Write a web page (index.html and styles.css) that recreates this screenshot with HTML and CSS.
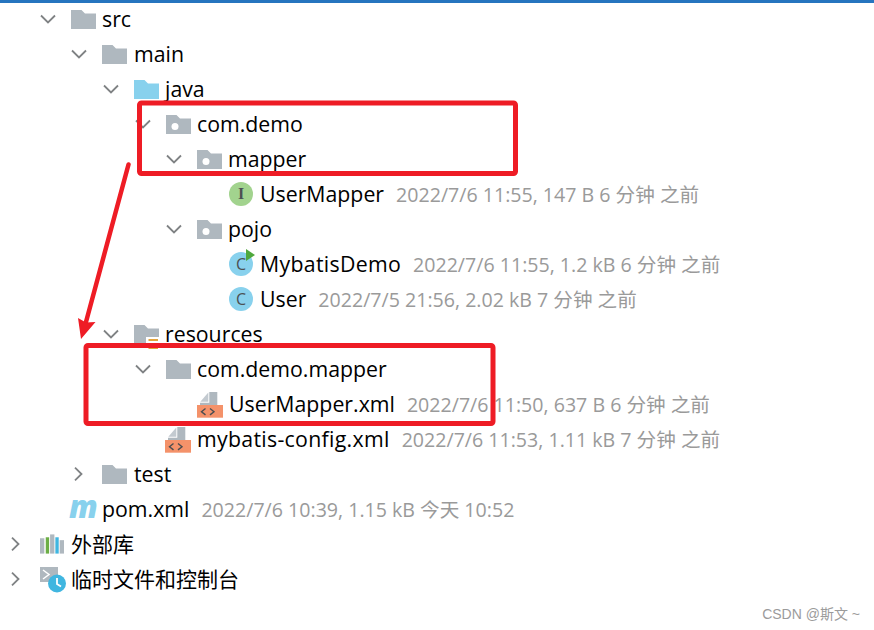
FILE: index.html
```html
<!DOCTYPE html>
<html lang="zh-CN">
	<head>
		<meta charset="UTF-8">
		<title>Project tree</title>
		<link rel="stylesheet" href="styles.css">
	</head>
	<body>
		<svg class="defs" width="0" height="0">
			<symbol id="folder" viewBox="0 0 25 19"><path d="M0 0h10.500l3.500 3.500h11V19H0z"/></symbol>
			<symbol id="pkg" viewBox="0 0 25 19"><path d="M0 0h10.500l3.500 3.500h11V19H0z"/><circle cx="9" cy="11.500" r="3.500" fill="#fff"/></symbol>
			<symbol id="chev-down" viewBox="0 0 16 10"><path d="M1 1.500l7 7 7-7" fill="none" stroke="#7f8284" stroke-width="1.800"/></symbol>
			<symbol id="chev-right" viewBox="0 0 9 14"><path d="M1 .7l6.500 6.300L1 13.300" fill="none" stroke="#7f8284" stroke-width="1.800"/></symbol>
			<symbol id="xml" viewBox="0 0 26 26">
				<path d="M12.300 0h8v14H3v-3.300h9.300z" fill="#afb8bf"/>
				<path d="M3.300 9.700L11.300 .5v9.200z" fill="#c3cad0"/>
				<path d="M0 13h26v12.700H0z" fill="#f4926a"/>
				<path d="M8.500 16.500l-4 3.200 4 3.200M13 16.500l4 3.200-4 3.200" fill="none" stroke="#4a4d50" stroke-width="1.400"/>
			</symbol>
		</svg>

		<div class="topbar"></div>
		<ul class="tree">
			<li class="row lv1"><svg class="chev"><use href="#chev-down"/></svg><svg class="icon folder"><use href="#folder"/></svg><span class="name">src</span></li>
			<li class="row lv2"><svg class="chev"><use href="#chev-down"/></svg><svg class="icon folder"><use href="#folder"/></svg><span class="name">main</span></li>
			<li class="row lv3"><svg class="chev"><use href="#chev-down"/></svg><svg class="icon folder blue"><use href="#folder"/></svg><span class="name">java</span></li>
			<li class="row lv4"><svg class="chev"><use href="#chev-down"/></svg><svg class="icon folder"><use href="#pkg"/></svg><span class="name">com.demo</span></li>
			<li class="row lv5"><svg class="chev"><use href="#chev-down"/></svg><svg class="icon folder"><use href="#pkg"/></svg><span class="name">mapper</span></li>
			<li class="row lv6"><span class="badge green">I</span><span class="name">UserMapper</span><span class="meta">2022/7/6 11:55, 147 B 6 分钟 之前</span></li>
			<li class="row lv5"><svg class="chev"><use href="#chev-down"/></svg><svg class="icon folder"><use href="#pkg"/></svg><span class="name">pojo</span></li>
			<li class="row lv6"><span class="badge blue run">C</span><span class="name wide">MybatisDemo</span><span class="meta">2022/7/6 11:55, 1.2 kB 6 分钟 之前</span></li>
			<li class="row lv6"><span class="badge blue">C</span><span class="name">User</span><span class="meta">2022/7/5 21:56, 2.02 kB 7 分钟 之前</span></li>
			<li class="row lv3"><svg class="chev"><use href="#chev-down"/></svg><svg class="icon res" viewBox="0 0 25 25"><path d="M0 0h10.500l3.500 3.500h11V19H0z" fill="#afb8bf"/><path d="M12 12h13v13H12z" fill="#fff"/><path d="M14.500 14h9.500v2h-9.500zM14.500 18h9.500v2h-9.500zM14.500 22h9.500v2h-9.500z" fill="#e3a43c"/></svg><span class="name">resources</span></li>
			<li class="row lv4"><svg class="chev"><use href="#chev-down"/></svg><svg class="icon folder"><use href="#folder"/></svg><span class="name">com.demo.mapper</span></li>
			<li class="row lv5"><svg class="icon file"><use href="#xml"/></svg><span class="name">UserMapper.xml</span><span class="meta">2022/7/6 11:50, 637 B 6 分钟 之前</span></li>
			<li class="row lv4"><svg class="icon file"><use href="#xml"/></svg><span class="name wide">mybatis-config.xml</span><span class="meta">2022/7/6 11:53, 1.11 kB 7 分钟 之前</span></li>
			<li class="row lv2"><svg class="chev side"><use href="#chev-right"/></svg><svg class="icon folder"><use href="#folder"/></svg><span class="name">test</span></li>
			<li class="row lv1"><span class="maven">m</span><span class="name">pom.xml</span><span class="meta">2022/7/6 10:39, 1.15 kB 今天 10:52</span></li>
			<li class="row lv0"><svg class="chev side"><use href="#chev-right"/></svg><svg class="icon lib" viewBox="0 0 25 20"><path d="M0 4h4.500v16H0z" fill="#afb8bf"/><path d="M6 3h3.500v17H6z" fill="#6cae45"/><path d="M10.500 0h4.500v20h-4.500z" fill="#afb8bf"/><path d="M16 3h3.500v17H16z" fill="#40b6e0"/><path d="M20.500 6H25v14h-4.500z" fill="#afb8bf"/></svg><span class="name">外部库</span></li>
			<li class="row lv0"><svg class="chev side"><use href="#chev-right"/></svg><svg class="icon scratch" viewBox="0 0 26 26"><path d="M0 0h18v15H0z" fill="#afb8bf"/><path d="M3 3l6 4.500-6 4.500" fill="none" stroke="#fff" stroke-width="1.500"/><circle cx="17" cy="16.500" r="9" fill="#40b6e0"/><path d="M17 11v6l4 2.500" fill="none" stroke="#fff" stroke-width="1.800"/></svg><span class="name">临时文件和控制台</span></li>
		</ul>

		<svg class="marks" width="874" height="630" viewBox="0 0 874 630">
			<rect x="139.500" y="103" width="376" height="70.500" rx="2"/>
			<rect x="86" y="345.500" width="407" height="78" rx="2"/>
			<path d="M128.500 164.500L86 322"/>
			<path class="head" d="M81 339L78 318l8 4.500 9.500-.5z"/>
		</svg>

		<div class="credit">CSDN @斯文 ~</div>
	</body>
</html>
```

FILE: styles.css
```css
body {
	margin: 0;
	background: #fff;
	font-family: "Open Sans", "Noto Sans CJK SC", sans-serif;
	color: #000;
	height: 630px;
	overflow: hidden;
	position: relative;
}
.defs {
	position: absolute;
}
.topbar {
	height: 3px;
	background: #2675bf;
}
.tree {
	list-style: none;
	margin: 0;
	padding: 0;
}
.row {
	height: 35px;
	display: flex;
	align-items: center;
	font-size: 21.300px;
	white-space: nowrap;
}
.row:first-child {
	margin-top: -1.500px;
}
.name {
	position: relative;
	top: -1px;
}
.name.wide {
	letter-spacing: .3px;
}
.lv0 { padding-left: 8px; font-size: 21px; }
.lv1 { padding-left: 40px; }
.lv2 { padding-left: 71px; }
.lv3 { padding-left: 103px; }
.lv4 { padding-left: 135px; }
.lv5 { padding-left: 166px; }
.lv6 { padding-left: 229px; }
.lv5:has(.file) { padding-left: 197px; }
.lv4:has(.file) { padding-left: 165px; }
.lv1:has(.maven) { padding-left: 69px; }

.chev {
	width: 16px;
	height: 10px;
	margin-right: 15px;
	flex: none;
}
.chev.side {
	width: 9px;
	height: 14px;
	margin-left: 3px;
	margin-right: 19px;
}
.lv0 .chev.side {
	margin-right: 20px;
}
.icon {
	flex: none;
}
.folder {
	width: 25px;
	height: 19px;
	fill: #afb8bf;
	margin-right: 6px;
}
.lv2 .folder {
	margin-right: 7px;
}
.folder.blue {
	fill: #88d1ed;
}
.res {
	width: 25px;
	height: 25px;
	margin-top: 6px;
	margin-right: 6px;
}
.file {
	width: 26px;
	height: 26px;
	margin-top: 2px;
	margin-right: 6px;
}
.lib {
	width: 24px;
	height: 20px;
	margin-right: 7px;
}
.scratch {
	width: 26px;
	height: 26px;
	margin-top: 2px;
	margin-right: 5px;
}
.badge {
	width: 24px;
	height: 24px;
	border-radius: 50%;
	flex: none;
	margin-right: 7px;
	display: flex;
	align-items: center;
	justify-content: center;
	font-size: 16px;
	color: #4b5054;
	position: relative;
}
.badge.green {
	background: #a2d38e;
	font-family: "Liberation Serif", serif;
	font-weight: bold;
}
.badge.blue {
	background: #88d1ed;
}
.badge.run::after {
	content: "";
	position: absolute;
	left: 17px;
	top: -3px;
	border-left: 9px solid #4fa83d;
	border-top: 6px solid transparent;
	border-bottom: 6px solid transparent;
}
.maven {
	width: 26px;
	margin-right: 7px;
	color: #88d1ed;
	font: italic 800 31px/1 "Open Sans", sans-serif;
	position: relative;
	top: -3px;
}
.meta {
	margin-left: 12px;
	font-size: 19.600px;
	color: #9a9a9a;
	position: relative;
	top: -1px;
}
.marks {
	position: absolute;
	left: 0;
	top: 0;
	fill: none;
	stroke: #ee1c25;
	stroke-width: 5;
}
.marks path {
	stroke-width: 4.500;
	stroke-linecap: round;
}
.marks .head {
	fill: #ee1c25;
	stroke: none;
}
.credit {
	position: absolute;
	right: 14px;
	bottom: 7px;
	font: 14px "Liberation Sans", "Noto Sans CJK SC", sans-serif;
	color: #9b9b9b;
}
```
